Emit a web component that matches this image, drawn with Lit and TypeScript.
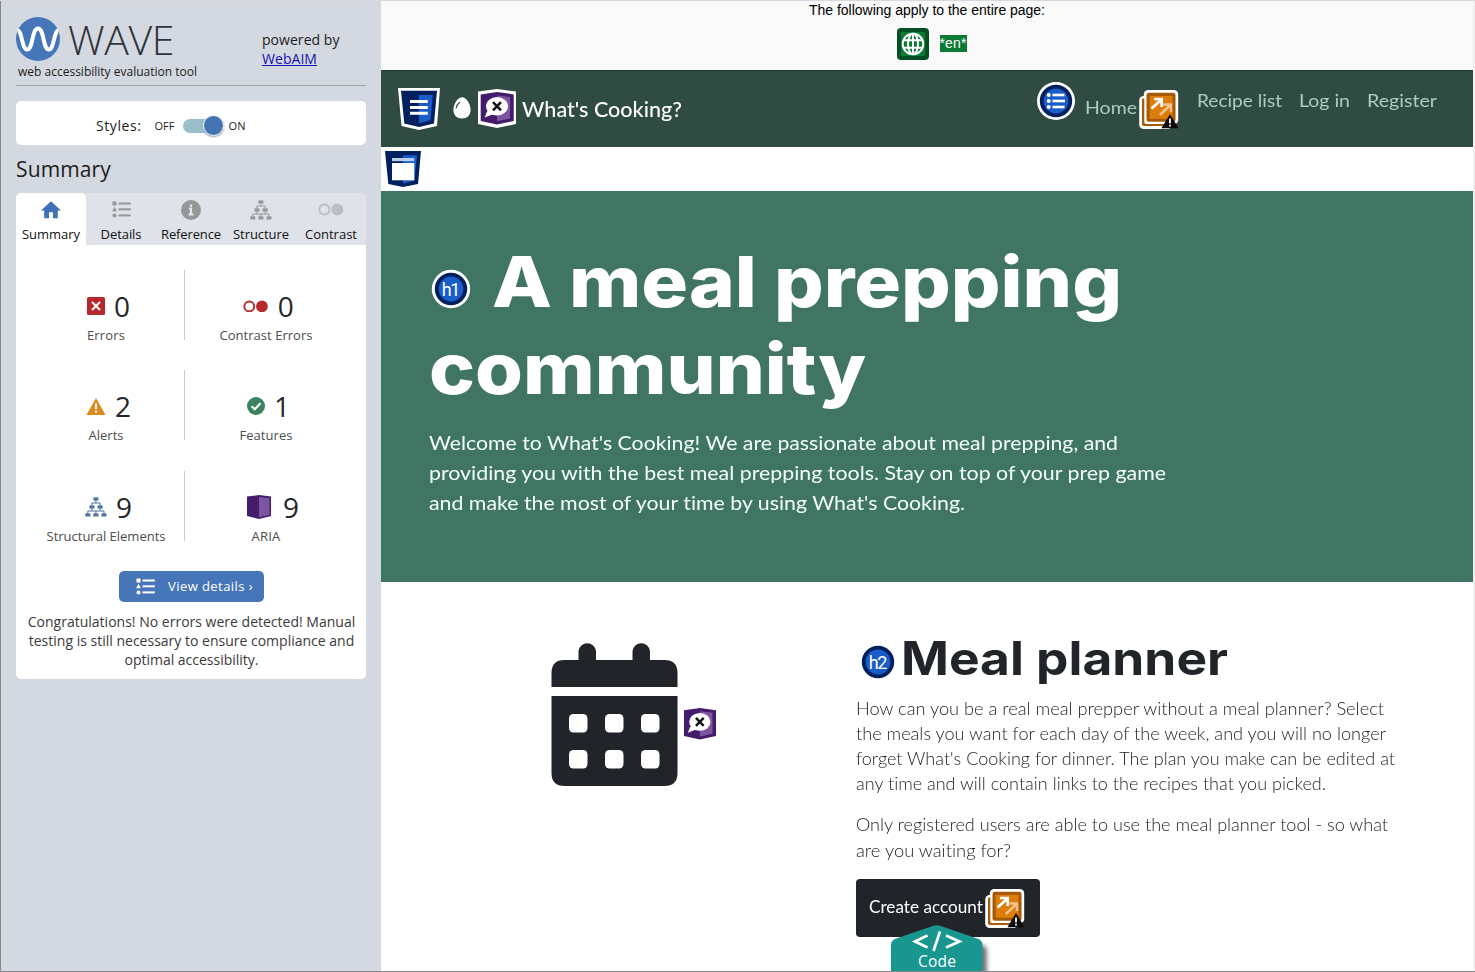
import { LitElement, html, css, svg, TemplateResult } from "lit";
import { customElement, property, query } from "lit/decorators.js";

/** One line of text set to a fixed measure, by tracking or by horizontal scale. */
@customElement("fit-text")
class FitText extends LitElement {
  @property() text = "";
  @property({ type: Number }) measure = 0;
  @property() mode: "track" | "scale" = "track";
  @query("span") span!: HTMLSpanElement;

  static styles = css`
    :host { display: inline-block; white-space: nowrap; vertical-align: top; font-variant-ligatures: none; }
    span { display: inline-block; transform-origin: 0 50%; text-decoration: inherit; }
  `;

  updated() {
    const s = this.span;
    s.style.letterSpacing = "0px";
    s.style.transform = "none";
    const natural = s.getBoundingClientRect().width;
    if (!natural || !this.measure) return;
    if (this.mode === "scale") {
      s.style.transform = `scaleX(${this.measure / natural})`;
    } else {
      s.style.letterSpacing = `${(this.measure - natural) / this.text.length}px`;
    }
    this.style.width = `${this.measure}px`;
  }

  render() {
    return html`<span>${this.text}</span>`;
  }
}

const fit = (text: string, measure: number, mode = "track") =>
  html`<fit-text .text=${text} .measure=${measure} .mode=${mode}></fit-text>`;

const listIcon = (w: number, h: number) => html`<svg width=${w} height=${h} viewBox="0 0 19 17" fill="currentColor">
  <rect x="0.5" y="0.5" width="4" height="4"/><path d="M2.5 5.8 4.9 10.2H0.1z"/><circle cx="2.5" cy="14.4" r="2"/>
  <rect x="6.5" y="1.5" width="12.3" height="2"/><rect x="6.5" y="7.3" width="12.3" height="2"/><rect x="6.5" y="13.4" width="12.3" height="2"/></svg>`;

const treeIcon = html`<svg width="22" height="20" viewBox="0 0 22 20" fill="currentColor">
  <rect x="8.4" y="0.4" width="5" height="3.2"/><rect x="4.4" y="8.4" width="5" height="3.2"/><rect x="12.6" y="8.4" width="5" height="3.2"/>
  <rect x="0.3" y="16.3" width="5" height="3.2"/><rect x="8.4" y="16.3" width="5" height="3.2"/><rect x="16.5" y="16.3" width="5" height="3.2"/>
  <path d="M10.9 3.5V6M6.9 8.5V6H15.1V8.5M6.9 11.5V14M15.1 11.5V14M2.8 16.3V14H19V16.3M10.9 14V16.3" fill="none" stroke="currentColor" stroke-width="1"/></svg>`;

const contrastIcon = (w: number) => html`<svg width=${w} height=${w / 2} viewBox="0 0 26 13">
  <circle cx="6.4" cy="6.5" r="5" fill="none" stroke="currentColor" stroke-width="2"/><circle cx="19.3" cy="6.5" r="6" fill="currentColor"/></svg>`;

const ariaArt = svg`<path d="M0 2.4 16.3 0 33 2.4V29L16.3 32.6 0 29z" fill="#431d6b"/>
  <path d="M16.3 3.4 29.4 5V26.6L16.3 29.3z" fill="#7d559f"/>
  <ellipse cx="16.3" cy="14.3" rx="11" ry="9.2" fill="#fff"/><path d="M6.5 19 4 25.6 13 22z" fill="#fff"/>
  <path d="M12.3 10.2 20.3 18.4M20.3 10.2 12.3 18.4" stroke="#111" stroke-width="2.5"/>`;

const redundantIcon = html`<svg width="40" height="40" viewBox="0 0 40 40">
  <rect x="0.2" y="6" width="33" height="33" rx="4.5" fill="#fff"/><rect x="4.8" y="0" width="34.4" height="34.4" rx="4.5" fill="#fff"/>
  <path d="M3 9.5V34Q3 36 5 36H26V34H7Q5.300 34 5.300 32V8.500H4Q3 8.500 3 9.500z" fill="#a85a0a"/>
  <rect x="7.500" y="2.800" width="29" height="29" rx="2.500" fill="#a65a08"/><rect x="10.700" y="6" width="22.800" height="22.800" fill="#dd7d0c"/>
  <path d="M20.800 25 31 15.500M24.500 14.500H32V22" fill="none" stroke="#f5c48c" stroke-width="2.400"/>
  <path d="M12.500 18.500 22 10M15 9H22.700V17" fill="none" stroke="#fff" stroke-width="2.700"/>
  <path d="M31 24 39.600 38.200H22.400z" fill="#0b0b0b"/><path d="M31 28.500V33.500M31 34.800V36.600" stroke="#fff" stroke-width="1.800"/></svg>`;

const headingBadge = (label: string, ring: boolean) => html`<svg width="40" height="40" viewBox="0 0 40 40">
  ${ring ? svg`<circle cx="20" cy="20" r="19.200" fill="#fff"/>` : ""}
  <circle cx="20" cy="20" r="16.200" fill="#02205e"/><circle cx="20" cy="20" r="12.400" fill="#1a5cc8"/>
  <text x="20" y="26.600" font-family="Roboto" font-weight="400" font-size="18" fill="#fff" text-anchor="middle" textLength="18.500">${label}</text></svg>`;

interface Stat { n: string; label: string; w: number; icon: TemplateResult; tone: string; }

const stats: Stat[][] = [
  [
    { n: "0", label: "Errors", w: 38, tone: "red", icon: html`<svg width="18" height="18" viewBox="0 0 18 18"><rect width="18" height="18" rx="1.500" fill="currentColor"/><path d="M5 5 13 13M13 5 5 13" stroke="#fff" stroke-width="2"/></svg>` },
    { n: "0", label: "Contrast Errors", w: 93, tone: "red", icon: contrastIcon(25.5) },
  ],
  [
    { n: "2", label: "Alerts", w: 35, tone: "orange", icon: html`<svg width="20" height="20" viewBox="0 0 20 20"><path d="M10 2 19.600 19H0.400z" fill="currentColor"/><path d="M10 7.500V13M10 14.600V16.700" stroke="#fff" stroke-width="2"/></svg>` },
    { n: "1", label: "Features", w: 53, tone: "green", icon: html`<svg width="18" height="18" viewBox="0 0 18 18"><circle cx="9" cy="9" r="9" fill="currentColor"/><path d="M4.500 9.200 7.800 12.300 13.500 6.300" fill="none" stroke="#fff" stroke-width="2.200"/></svg>` },
  ],
  [
    { n: "9", label: "Structural Elements", w: 119, tone: "steel", icon: treeIcon },
    { n: "9", label: "ARIA", w: 29, tone: "", icon: html`<svg width="24" height="24" viewBox="0 0 24 24"><path d="M0 1.500 12 0 24 1.500V21L12 24 0 21z" fill="#431d6b"/><path d="M12 2 22.600 3.200V19.800L12 22.300z" fill="#7d559f"/></svg>` },
  ],
];

@customElement("wave-sidebar")
class WaveSidebar extends LitElement {
  static styles = css`
    :host { display: block; box-sizing: border-box; background: #d4d8e0; border-left: 1px solid #84878c; padding: 15px 15px 0; color: #1c1c1c; font: 14px/19px "Open Sans", sans-serif; }
    svg { display: block; flex: none; }
    .head { display: flex; height: 69px; border-bottom: 1px solid #a0a4ab; }
    .brand { width: 246px; }
    .logo { display: flex; height: 46px; gap: 8px; padding-top: 1px; box-sizing: border-box; }
    .wave { font: 300 41px/44px "Open Sans", sans-serif; color: #30343a; height: 44px; }
    .tag { font-size: 12px; line-height: 20px; padding-left: 2px; }
    .powered { padding-top: 14px; }
    .link { color: #1414b4; text-decoration: underline; }
    .link fit-text { text-decoration: underline; }
    .styles { display: flex; align-items: center; height: 44px; margin-top: 15px; padding: 5px 0 0 80px; background: #fff; border-radius: 5px; box-sizing: border-box; }
    .small { font-size: 11px; }
    .off { margin-left: 13px; }
    .switch { width: 34px; height: 14px; border-radius: 7px; background: #9bbfca; margin: 0 12px 0 8px; display: flex; align-items: center; justify-content: flex-end; }
    .knob { width: 19px; height: 19px; flex: none; border-radius: 50%; background: #4574b4; border: 1px solid #fff; margin-right: -7px; box-shadow: 0 1px 2px #8a9bb0; }
    h2 { margin: 10px 0 0; font-size: 21px; line-height: 28px; font-weight: 400; height: 38px; }
    .tabs { display: grid; grid-template-columns: repeat(5, 70px); height: 52px; background: #dfe2e8; border-radius: 5px 5px 0 0; }
    .tab { display: flex; flex-direction: column; align-items: center; font-size: 13px; line-height: 18px; color: #111; border-radius: 5px 5px 0 0; }
    .tab.on { background: #fff; }
    .glyph { height: 31px; display: flex; align-items: center; color: #949698; padding-top: 1px; }
    .glyph.blue { color: #3f72b5; }
    .glyph.pale { color: #bcbec1; }
    .panel { height: 434px; background: #fff; border-radius: 0 0 5px 5px; padding: 25px 10px 0; box-sizing: border-box; }
    .row { display: grid; grid-template: 70px / 158px 1px 162px; height: 70px; margin-bottom: 30.400px; }
    .rule { background: #c8cacc; }
    .stat { display: flex; flex-direction: column; align-items: center; padding-top: 16px; box-sizing: border-box; }
    .first { padding-left: 2px; }
    .count { display: flex; align-items: center; gap: 9px; height: 40px; padding-left: 5px; font-size: 28px; line-height: 40px; color: #262626; }
    .label { font-size: 13px; line-height: 18px; color: #4c4c4c; }
    .red { color: #b8292f; } .orange { color: #e08a1e; } .green { color: #3b8060; } .steel { color: #4c74a2; }
    .aria { gap: 12px; padding-left: 14px; }
    .btn { display: flex; align-items: center; width: 145px; height: 31px; margin: 0 0 0 93px; padding-left: 17px; gap: 13px; border-radius: 5px; background: #4776b8; color: #fff; box-sizing: border-box; font-size: 13px; }
    .note { display: flex; flex-direction: column; align-items: center; padding-top: 10px; color: #3a3a3a; width: 331px; }
  `;

  render() {
    const tabs = [
      { t: "Summary", w: 58, c: "blue", g: html`<svg width="20" height="18" viewBox="0 0 20 18" fill="currentColor"><path d="M10 0.200 20 9.400H16.800V17.300H12V11.300H8V17.300H3.200V9.400H0z"/></svg>` },
      { t: "Details", w: 41, c: "", g: listIcon(19, 17) },
      { t: "Reference", w: 60, c: "", g: html`<svg width="20" height="20" viewBox="0 0 20 20"><circle cx="10" cy="10" r="10" fill="currentColor"/><path d="M10 4.500V6.700M8 8.600H10V14.500M7.500 14.500H12.500" stroke="#e4e7eb" stroke-width="2.200" fill="none"/></svg>` },
      { t: "Structure", w: 56, c: "", g: treeIcon },
      { t: "Contrast", w: 52, c: "pale", g: contrastIcon(26) },
    ];
    return html`
      <div class="head">
        <div class="brand">
          <div class="logo">
            <svg width="44" height="44" viewBox="0 0 44 44"><circle cx="22" cy="22" r="22" fill="#4577b8"/>
              <path d="M1.500 13.500C6 13.500 6 32.500 11 32.500 17.500 32.500 15.500 11.500 22 11.500S26.500 32.500 33 32.500C38 32.500 38 13.500 42.500 13.500" fill="none" stroke="#fff" stroke-width="4"/></svg>
            <div class="wave">${fit("WAVE", 106)}</div>
          </div>
          <div class="tag">${fit("web accessibility evaluation tool", 179)}</div>
        </div>
        <div class="powered"><div>${fit("powered by", 77.5)}</div><div class="link">${fit("WebAIM", 55)}</div></div>
      </div>
      <div class="styles">${fit("Styles:", 45.5)}<span class="small off">${fit("OFF", 20)}</span>
        <div class="switch"><div class="knob"></div></div><span class="small">${fit("ON", 17)}</span></div>
      <h2>${fit("Summary", 95)}</h2>
      <div class="tabs">${tabs.map((t, i) => html`<div class="tab ${i ? "" : "on"}"><div class="glyph ${t.c}">${t.g}</div>${fit(t.t, t.w)}</div>`)}</div>
      <div class="panel">
        ${stats.map(([a, b]) => html`<div class="row">${this.stat(a, "first")}<div class="rule"></div>${this.stat(b, "")}</div>`)}
        <div class="btn">${listIcon(19, 17)}${fit("View details ›", 85)}</div>
        <div class="note">${fit("Congratulations! No errors were detected! Manual", 327.5)}${fit("testing is still necessary to ensure compliance and", 325.5)}${fit("optimal accessibility.", 134)}</div>
      </div>`;
  }

  stat(s: Stat, cls: string) {
    return html`<div class="stat ${cls}"><div class="count ${s.label === "ARIA" ? "aria" : ""}"><span class=${s.tone}>${s.icon}</span>${s.n}</div><div class="label">${fit(s.label, s.w)}</div></div>`;
  }
}

@customElement("cooking-page")
class CookingPage extends LitElement {
  static styles = css`
    :host { display: block; background: #fff; overflow: hidden; font-family: Lato, sans-serif; }
    svg { display: block; flex: none; }
    .notice { height: 70px; background: #f9f9f9; border-top: 1px solid #d5dad8; box-sizing: border-box; color: #000; font: 14px/18px "Liberation Sans", sans-serif; text-align: center; }
    .chips { display: flex; align-items: flex-start; padding: 9px 0 0 516px; gap: 11px; }
    .lang { background: #0c7a35; color: #fff; height: 17px; line-height: 17px; margin: 7px 0 0 -0.500px; width: 27px; }
    .nav { display: flex; height: 77px; background: #2f4b42; padding: 12px 36px 0 17px; box-sizing: border-box; border-top: 1px solid #1d3d33; }
    .logo { display: flex; align-items: center; height: 52px; }
    .egg { margin: -2px 0 0 13px; }
    .badge { margin: -1px 6px 0 7px; }
    .name { font-size: 22px; line-height: 30px; color: #fff; font-weight: 500; }
    .links { margin-left: auto; display: flex; align-items: flex-start; font-size: 18px; line-height: 26px; color: #a9cfc0; }
    .menu { margin: -1px 11px 0 0; }
    .home { display: flex; margin-right: 18px; }
    .home fit-text { margin: 11px 1px 0 -1px; }
    .home svg { margin: 7px 0 0 1px; }
    .links > fit-text { margin: 4px 17px 0 0; }
    .links > fit-text:last-child { margin-right: 0; }
    .strip { height: 44px; padding: 4px; box-sizing: border-box; }
    .hero { height: 391px; background: #407564; padding: 48px; box-sizing: border-box; color: #fff; }
    h1 { margin: 0; font: 800 70px/86.400px Inter, sans-serif; height: 188px; }
    .h1a { display: flex; align-items: flex-start; height: 87px; }
    .h1a svg { margin: 30px 21px 0 2px; }
    .lead { display: flex; flex-direction: column; font-size: 20px; line-height: 30px; color: #f2fffa; }
    .planner { display: grid; grid-template-columns: 475px 1fr; }
    .picture { display: flex; padding: 60px 0 0 170px; align-items: flex-start; }
    .picture svg + svg { margin: 66px 0 0 6px; }
    .copy { padding-top: 47px; }
    h2 { display: flex; margin: 0; height: 66.500px; font: 700 46px/58px Inter, sans-serif; color: #212529; }
    h2 svg { margin: 13px 3px 0 2px; }
    .para { display: flex; flex-direction: column; font-size: 17px; line-height: 25.200px; color: #212529; margin-bottom: 16px; font-weight: 300; }
    .cta { display: flex; width: 184px; height: 58px; margin-top: 16.500px; background: #212529; border-radius: 4px; color: #fff; font-size: 17px; line-height: 55px; padding-left: 13px; box-sizing: border-box; }
    .cta svg { margin: 10px 0 0 2px; }
  `;

  render() {
    const s = "scale";
    return html`
      <div class="notice">
        <div>${fit("The following apply to the entire page:", 236)}</div>
        <div class="chips">
          <svg width="32" height="32" viewBox="0 0 32 32"><rect width="32" height="32" rx="4" fill="#034f22"/><rect x="4" y="4" width="24" height="24" fill="#0c7a35"/>
            <g fill="none" stroke="#fff" stroke-width="2"><circle cx="16" cy="16" r="10.300"/><ellipse cx="16" cy="16" rx="5" ry="10.300"/><path d="M16 5.700V26.300M6.500 12.300H25.500M6.500 19.700H25.500"/></g></svg>
          <div class="lang">${fit("*en*", 27)}</div>
        </div>
      </div>
      <div class="nav">
        <div class="logo">
          <svg width="42" height="42" viewBox="0 0 42 42"><path d="M0 0H42L39 38 21 42 3.500 38z" fill="#fff"/><path d="M3 2.800H39L36 35.600 21 39 6.300 35.600z" fill="#02205e"/><path d="M20.800 7H34.800L32.500 32.300 20.800 35.300z" fill="#1a5cc8"/><path d="M12 13.500H29.800M12 19.400H29.800M12 25.200H29.800" stroke="#fff" stroke-width="3"/></svg>
          <svg class="egg" width="18" height="22" viewBox="0 0 18 22"><path d="M9 0.300C13.500 0.300 17.600 7.500 17.600 13 17.600 18.200 14 21.500 9 21.500S0.400 18.200 0.400 13C0.400 7.500 4.500 0.300 9 0.300z" fill="#fff"/><path d="M3 11.500Q3.800 7.500 6.800 5" fill="none" stroke="#2f4b42" stroke-width="1.100"/></svg>
          <svg class="badge" width="38" height="39" viewBox="0 0 38 39"><path d="M0 2.600 19 0 38 2.600V35L19 39 0 35z" fill="#fff"/><g transform="translate(2.700 3)">${ariaArt}</g></svg>
          <div class="name">${fit("What's Cooking?", 160, s)}</div>
        </div>
        <div class="links">
          <svg class="menu" width="38" height="38" viewBox="0 0 38 38"><circle cx="19" cy="19" r="19" fill="#fff"/><circle cx="19" cy="19" r="16.200" fill="#02205e"/><circle cx="19" cy="19" r="12.400" fill="#1a5cc8"/>
            <g fill="#fff"><circle cx="11.700" cy="13" r="2"/><circle cx="11.700" cy="19" r="2"/><circle cx="11.700" cy="25" r="2"/><rect x="15.500" y="11.700" width="12" height="2.600"/><rect x="15.500" y="17.700" width="12.500" height="2.600"/><rect x="15.500" y="23.700" width="12" height="2.600"/></g></svg>
          <div class="home">${fit("Home", 52, s)}${redundantIcon}</div>
          ${fit("Recipe list", 85, s)}${fit("Log in", 51, s)}${fit("Register", 70, s)}
        </div>
      </div>
      <div class="strip"><svg width="36" height="36" viewBox="0 0 36 36"><path d="M0 0H36L33 33 18 36 3.300 33z" fill="#02205e"/><path d="M18 4.300H32L29.500 29.500 18 32.500z" fill="#1a5cc8"/><path d="M7 7H29.300V10.200H7z" fill="#b9cdec"/><path d="M7 12H29.300V29.300H7z" fill="#fff"/></svg></div>
      <div class="hero">
        <h1><div class="h1a">${headingBadge("h1", true)}${fit("A meal prepping", 630, s)}</div>${fit("community", 437, s)}</h1>
        <div class="lead">${fit("Welcome to What's Cooking! We are passionate about meal prepping, and", 689, s)}${fit("providing you with the best meal prepping tools. Stay on top of your prep game", 737, s)}${fit("and make the most of your time by using What's Cooking.", 536, s)}</div>
      </div>
      <div class="planner">
        <div class="picture">
          <svg width="127" height="144" viewBox="0 0 127 144"><path d="M0.500 45V31Q0.500 18 13.500 18H27.500V9A8.800 8.800 0 0 1 45 9V18H81.500V9A8.800 8.800 0 0 1 99 9V18H113.500Q126.500 18 126.500 31V45zM0.500 54H126.500V131Q126.500 144 113.500 144H13.500Q0.500 144 0.500 131z" fill="#212529"/>
            <g fill="#fff">${[18, 54, 90].map((x) => [72, 108].map((y) => svg`<rect x=${x} y=${y} width="18.500" height="18.500" rx="4.500"/>`))}</g></svg>
          <svg width="32" height="32" viewBox="0 0 33 33">${ariaArt}</svg>
        </div>
        <div class="copy">
          <h2>${headingBadge("h2", false)}${fit("Meal planner", 327, s)}</h2>
          <div class="para">${fit("How can you be a real meal prepper without a meal planner? Select", 528, s)}${fit("the meals you want for each day of the week, and you will no longer", 530, s)}${fit("forget What's Cooking for dinner. The plan you make can be edited at", 539, s)}${fit("any time and will contain links to the recipes that you picked.", 470, s)}</div>
          <div class="para">${fit("Only registered users are able to use the meal planner tool - so what", 532, s)}${fit("are you waiting for?", 155, s)}</div>
          <div class="cta">${fit("Create account", 114, s)}${redundantIcon}</div>
        </div>
      </div>`;
  }
}

@customElement("app-root")
class AppRoot extends LitElement {
  static styles = css`
    :host { display: block; position: relative; width: 1475px; height: 972px; overflow: hidden; box-sizing: border-box; background: #f0f0f0; border-top: 1px solid #d5d8dc; border-bottom: 1px solid #858789; }
    .frame { display: grid; grid-template-columns: 381px 1092px; height: 970px; }
    cooking-page { margin-top: -1px; }
    .code { position: absolute; left: 891px; bottom: 0; width: 104px; height: 46px; }
    .code svg { display: block; }
  `;

  render() {
    return html`<div class="frame"><wave-sidebar></wave-sidebar><cooking-page></cooking-page></div>
      <div class="code"><svg width="104" height="46" viewBox="0 0 104 46">
        <defs><filter id="soft" x="-20%" y="-20%" width="150%" height="150%"><feGaussianBlur stdDeviation="2.200"/></filter></defs>
        <path d="M10 20H90Q96 20 96 26V50H10z" fill="#777" filter="url(#soft)"/>
        <path d="M0 46V20Q0 15.500 4.500 13.800L42.500 0.800Q45.700 -0.200 49 0.800L86.800 13.800Q91.500 15.500 91.500 20V46z" fill="#1a9690"/>
        <path d="M36.500 10.500 24 16.500 36.500 22.500M55 10.500 68.500 16.500 55 22.500M49 6.500 42.500 26" fill="none" stroke="#fff" stroke-width="2.700"/>
        <text x="46" y="42" font-family="Open Sans" font-size="15.500" fill="#fff" text-anchor="middle" textLength="38">Code</text></svg></div>`;
  }
}
